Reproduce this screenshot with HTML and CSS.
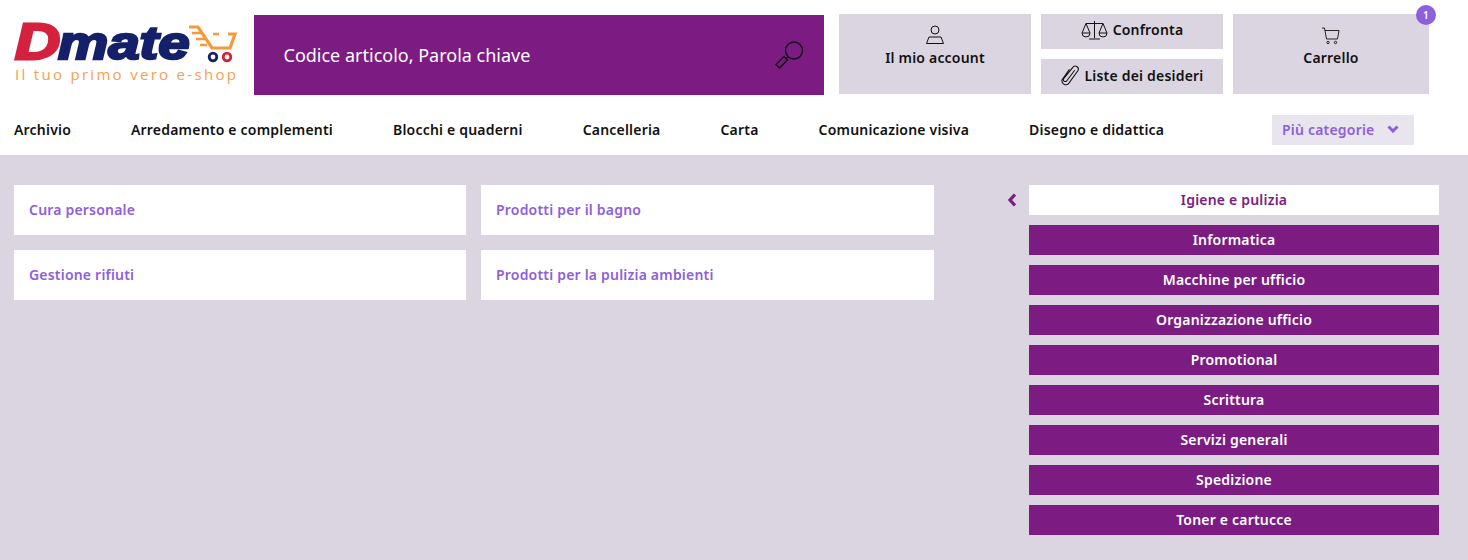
FILE: index.html
```html
<!DOCTYPE html>
<html lang="it">
<head>
<meta charset="utf-8">
<title>Dmate</title>
<link rel="stylesheet" href="styles.css">
</head>
<body>
<header class="top">
  <a class="logo">
    <span class="brand"><span class="brand-d">D</span><span class="brand-rest">mate</span></span>
    <svg class="cart-logo" viewBox="0 0 52 38" width="52" height="38">
      <path d="M2 2h9l14 21h18l5-14h-7" fill="none" stroke="#f6993b" stroke-width="3.200"/>
      <path d="M26 9h6M5 8h9M9 14h9M13 20h7" stroke="#f6993b" stroke-width="2.600" fill="none"/>
      <circle cx="26" cy="32" r="3.800" fill="#fff" stroke="#15206a" stroke-width="2.800"/>
      <circle cx="40" cy="32" r="3.800" fill="#fff" stroke="#d4213d" stroke-width="2.800"/>
    </svg>
    <span class="tagline">Il tuo primo vero e-shop</span>
  </a>
  <div class="search">
    <span>Codice articolo, Parola chiave</span>
    <svg viewBox="0 0 30 30" width="30" height="30" fill="none" stroke="#111" stroke-width="1.400">
      <circle cx="20" cy="10.500" r="8.500"/>
      <path d="M14 16.500l-2.500 2.500M10 16.500l3.500 3.500-8 8-3.500-3.500z"/>
    </svg>
  </div>
  <div class="tools">
    <a class="tool tool-big tool-account">
      <svg viewBox="0 0 20 20" width="20" height="20" fill="none" stroke="#111" stroke-width="1">
        <circle cx="10" cy="5" r="4"/>
        <path d="M4 12h12l2.500 6.500H1.500z"/>
      </svg>
      <span>Il mio account</span>
    </a>
    <div class="tool-stack">
      <a class="tool tool-small">
        <svg viewBox="0 0 27 20" width="27" height="20" fill="none" stroke="#111" stroke-width="1">
          <path d="M13.500 1v17M8 19h11M5 3.500h17M5 3.500L1 13h8zM22 3.500L18 13h8z"/>
          <path d="M1 13a4 4 0 0 0 8 0M18 13a4 4 0 0 0 8 0"/>
        </svg>
        <span>Confronta</span>
      </a>
      <a class="tool tool-small">
        <svg viewBox="0 0 18 20" width="19" height="21" fill="none" stroke="#111" stroke-width="1">
          <path d="M13 5L5.500 15a1.800 1.800 0 0 1-3-2L11 2.500a2.800 2.800 0 0 1 5 3L7 18a3.800 3.800 0 0 1-6-4L8 4"/>
        </svg>
        <span>Liste dei desideri</span>
      </a>
    </div>
    <a class="tool tool-big tool-cart">
      <svg viewBox="0 0 20 18" width="20" height="18" fill="none" stroke="#111" stroke-width="0.900">
        <path d="M1 1h2.500l2 11h11l1.500-8.500H4"/>
        <circle cx="7" cy="15.500" r="1.200"/>
        <circle cx="14.500" cy="15.500" r="1.200"/>
      </svg>
      <span>Carrello</span>
      <b class="badge">1</b>
    </a>
  </div>
</header>
<nav class="nav">
  <a>Archivio</a>
  <a>Arredamento e complementi</a>
  <a>Blocchi e quaderni</a>
  <a>Cancelleria</a>
  <a>Carta</a>
  <a>Comunicazione visiva</a>
  <a>Disegno e didattica</a>
  <a class="more">Più categorie
    <svg viewBox="0 0 12 8" width="12" height="8" fill="none" stroke="#8e5fdc" stroke-width="3"><path d="M1.500 1.500L6 6l4.500-4.500"/></svg>
  </a>
</nav>
<main class="content">
  <section class="cards">
    <a class="card">Cura personale</a>
    <a class="card">Prodotti per il bagno</a>
    <a class="card">Gestione rifiuti</a>
    <a class="card">Prodotti per la pulizia ambienti</a>
  </section>
  <aside class="side">
    <svg class="back" viewBox="0 0 10 14" width="10" height="14" fill="none" stroke="#7c1c82" stroke-width="3.200"><path d="M8 1.500L3 7l5 5.500"/></svg>
    <ul class="cats">
      <li class="cat active">Igiene e pulizia</li>
      <li class="cat">Informatica</li>
      <li class="cat">Macchine per ufficio</li>
      <li class="cat">Organizzazione ufficio</li>
      <li class="cat">Promotional</li>
      <li class="cat">Scrittura</li>
      <li class="cat">Servizi generali</li>
      <li class="cat">Spedizione</li>
      <li class="cat">Toner e cartucce</li>
    </ul>
  </aside>
</main>
</body>
</html>
```
FILE: styles.css
```css
* { box-sizing: border-box; }
html, body { margin: 0; padding: 0; }
body {
  width: 1468px;
  height: 560px;
  overflow: hidden;
  background: #dbd5e1;
  font-family: "Noto Sans", "Liberation Sans", sans-serif;
  font-size: 14px;
  font-weight: 600;
  letter-spacing: 0.200px;
  color: #111;
}
.top {
  display: flex;
  align-items: flex-start;
  height: 100px;
  padding: 14px 0 0 14px;
  background: #fff;
}
.logo {
  position: relative;
  display: block;
  flex: 0 0 240px;
  height: 81px;
}
.brand {
  display: flex;
  align-items: baseline;
  height: 44px;
  margin-top: 6px;
  font-family: "Liberation Sans", sans-serif;
  font-weight: 700;
  font-style: italic;
  line-height: 44px;
  letter-spacing: 0;
  white-space: nowrap;
}
.brand-d {
  font-size: 50px;
  color: #d4213d;
  -webkit-text-stroke: 2.800px #d4213d;
  transform: scaleX(1.250);
  transform-origin: left;
  margin-left: 1px;
}
.brand-rest {
  display: inline-block;
  margin-left: 7px;
  font-size: 47px;
  color: #15206a;
  -webkit-text-stroke: 2.400px #15206a;
  transform: scaleX(1.200);
  transform-origin: left;
}
.cart-logo { position: absolute; left: 173px; top: 11px; }
.tagline {
  display: block;
  margin: 2px 0 0 1px;
  font-family: "Open Sans", sans-serif;
  font-size: 15px;
  font-weight: 400;
  letter-spacing: 2.300px;
  line-height: 16px;
  color: #f6a04e;
  white-space: nowrap;
}
.search {
  display: flex;
  align-items: center;
  justify-content: space-between;
  width: 570px;
  height: 80px;
  margin-top: 1px;
  padding: 0 20px 0 29.500px;
  background: #7c1c82;
  color: #fff;
  font-size: 18px;
  font-weight: 400;
  letter-spacing: 0;
}
.tools {
  display: flex;
  gap: 10px;
  margin-left: 15px;
}
.tool {
  display: flex;
  align-items: center;
  background: #dbd5e1;
}
.tool-big {
  position: relative;
  flex-direction: column;
  height: 80px;
  padding-top: 11px;
  gap: 3px;
}
.tool-account { width: 192px; }
.tool-cart { width: 196px; padding-top: 13px; }
.tool-stack {
  display: flex;
  flex-direction: column;
  gap: 10px;
  width: 182px;
}
.tool-small {
  justify-content: center;
  gap: 5px;
  height: 35px;
  padding-bottom: 4px;
}
.tool-small + .tool-small { padding-bottom: 3px; }
.badge {
  position: absolute;
  top: -9px;
  right: -7px;
  width: 20px;
  height: 20px;
  border-radius: 50%;
  background: #8e5fdc;
  color: #fff;
  font-size: 10px;
  font-weight: 600;
  line-height: 20px;
  text-align: center;
}
.nav {
  display: flex;
  align-items: center;
  gap: 60px;
  height: 55px;
  padding: 3px 54px 0 14px;
  background: #fff;
}
.more {
  display: flex;
  align-items: center;
  gap: 13px;
  width: 142px;
  height: 30px;
  margin: 2px 0 0 auto;
  padding: 0 0 2px 10px;
  background: #e9e5ee;
  color: #8e5fdc;
}
.content {
  display: flex;
  align-items: flex-start;
  padding: 30px 0 0 14px;
}
.cards {
  display: grid;
  grid-template-columns: 452px 453px;
  grid-auto-rows: 50px;
  gap: 15px;
}
.card {
  display: flex;
  align-items: center;
  padding: 0 0 2px 15px;
  background: #fff;
  color: #8e5fdc;
}
.side {
  display: flex;
  align-items: flex-start;
  margin-left: 73px;
  gap: 12px;
}
.back { margin-top: 8px; }
.cats {
  display: flex;
  flex-direction: column;
  gap: 10px;
  width: 410px;
  margin: 0;
  padding: 0;
  list-style: none;
}
.cat {
  height: 30px;
  line-height: 30px;
  text-align: center;
  background: #7c1c82;
  color: #fff;
}
.cat.active {
  background: #fff;
  color: #7c1c82;
}
```
